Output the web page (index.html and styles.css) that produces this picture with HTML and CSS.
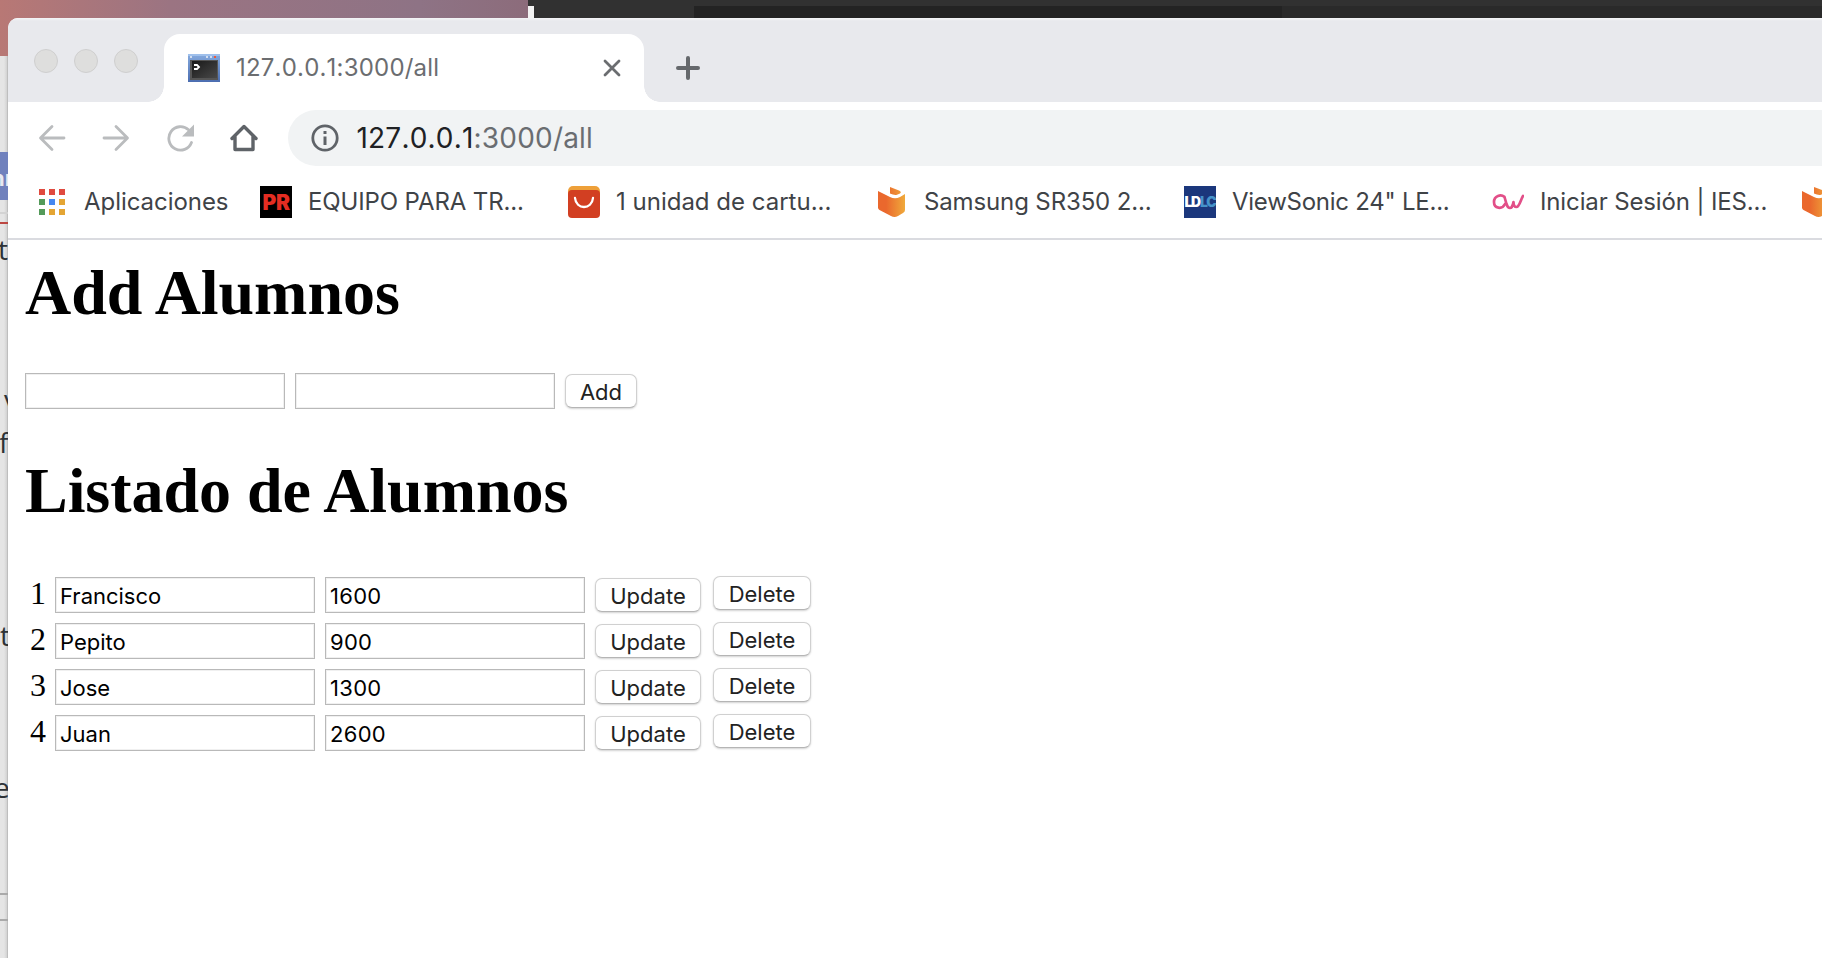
FILE: index.html
```html
<!DOCTYPE html>
<html lang="es">
<head>
<meta charset="utf-8">
<title>127.0.0.1:3000/all</title>
<link rel="stylesheet" href="styles.css">
</head>
<body>
<div class="desktop">
  <div class="dark-bar"><i class="sliver"></i><i class="dark-tab"></i><i class="dark-tab lighter"></i></div>
  <div class="behind">
    <span class="blue-band"><b>nr</b></span>
    <i class="rule pale"></i><i class="rule red"></i><i class="rule low"></i><i class="rule lower"></i>
    <span class="frag f1">t</span><span class="frag f2">v</span><span class="frag f3">f</span><span class="frag f4">t</span><span class="frag f5">e</span>
  </div>
  <main class="window">
    <div class="tabstrip">
      <div class="lights"><i></i><i></i><i></i></div>
      <div class="tab">
        <svg class="favicon" width="32" height="28" viewBox="0 0 32 28">
          <defs>
            <linearGradient id="frame" x2="0" y2="1"><stop stop-color="#86abdf"/><stop offset="1" stop-color="#4b6db0"/></linearGradient>
            <linearGradient id="screen" x2="1" y2="1"><stop stop-color="#191919"/><stop offset="1" stop-color="#484848"/></linearGradient>
          </defs>
          <path fill="url(#frame)" d="M0 0h32v28H0z"/><path fill="#9fc0ec" d="M0 0h32v2H0z"/>
          <path fill="#d3def0" d="M2 2h2v2H2zM18 2h2v2h-2zM22 2h2v2h-2z"/><path fill="#f0593a" d="M26 2h2v2h-2z"/>
          <path fill="#555" d="M2 6h28v20H2z"/><path fill="url(#screen)" d="M4 7h25v17H4z"/>
          <path d="M6 11h3l2 2-2 2H6" fill="none" stroke="#fff" stroke-width="1.8"/>
        </svg>
        <span class="tab-title">127.0.0.1:3000/all</span>
        <svg class="close" width="18" height="18" viewBox="0 0 18 18"><path d="M2 2l14 14M16 2L2 16" stroke="#6b6d70" stroke-width="2.8" stroke-linecap="round"/></svg>
      </div>
      <svg class="plus" width="24" height="24" viewBox="0 0 24 24"><path d="M12 2v20M2 12h20" stroke="#65686c" stroke-width="4" stroke-linecap="round"/></svg>
    </div>
    <div class="toolbar">
      <svg width="28" height="28" viewBox="0 0 28 28" class="nav"><path d="M26 14H3M14 2.500L2.500 14 14 25.500" /></svg>
      <svg width="28" height="28" viewBox="0 0 28 28" class="nav"><path d="M2 14h23M14 2.500L25.500 14 14 25.500"/></svg>
      <svg width="28" height="28" viewBox="0 0 28 28" class="nav"><path d="M25.500 18.500A11.700 11.700 0 1 1 22.500 5.800"/><path class="solid" d="M28 .500v12H16z"/></svg>
      <svg width="28" height="28" viewBox="0 0 28 28" class="nav home"><path d="M2 14.500L14 2.500l12 12M5 12v13.500h18V12"/></svg>
      <div class="omnibox">
        <svg width="28" height="28" viewBox="0 0 28 28"><circle cx="14" cy="14" r="12.200" fill="none" stroke="#5f6368" stroke-width="2.800"/><path fill="#5f6368" d="M12.500 7h3v3h-3zM12.500 12.500h3V21h-3z"/></svg>
        <span class="url"><b>127.0.0.1</b>:3000/all</span>
      </div>
    </div>
    <nav class="bookmarks">
      <a class="apps">
        <svg width="26" height="26" viewBox="0 0 26 26"><path fill="#e04a3f" d="M0 0h6v6H0zM10 0h6v6h-6zM20 0h6v6h-6z"/><path fill="#549a5a" d="M0 10h6v6H0zM0 20h6v6H0z"/><path fill="#4688f1" d="M10 10h6v6h-6z"/><path fill="#e4a534" d="M20 10h6v6h-6zM10 20h6v6h-6zM20 20h6v6h-6z"/></svg>
        <span class="t0">Aplicaciones</span>
      </a>
      <a class="mark"><i class="pr">PR</i><span class="t1">EQUIPO PARA TR...</span></a>
      <a class="mark">
        <svg width="32" height="32" viewBox="0 0 32 32"><rect width="32" height="20" rx="5" fill="#eea039"/><path fill="#d23f22" d="M0 8q0-4 4-4h24q4 0 4 4v20q0 4-4 4H4q-4 0-4-4z"/><path d="M7 12c1 12 17 12 18 0" fill="none" stroke="#fff" stroke-width="2.300" stroke-linecap="round"/></svg>
        <span class="t2">1 unidad de cartu...</span>
      </a>
      <a class="mark">
        <svg width="32" height="32" viewBox="0 0 32 32"><defs><linearGradient id="box" gradientUnits="userSpaceOnUse" x1="2" x2="29" y1="0" y2="0"><stop offset=".3" stop-color="#ea682d"/><stop offset="1" stop-color="#f0aa3b"/></linearGradient></defs><path fill="url(#box)" d="M2 5L14 11q5 2.500 10 0l5-3v16q0 2-2 3l-5 3q-3.500 2-7 0L3.500 24Q2 23 2 21.500z"/><path fill="url(#box)" d="M14 1l9 3.500q3 1.500 1 3l-3 1.300q-3 .7-7-1.300z"/></svg>
        <span class="t3">Samsung SR350 2...</span>
      </a>
      <a class="mark"><i class="ldlc">LD<b>LC</b></i><span class="t4">ViewSonic 24" LE...</span></a>
      <a class="mark">
        <svg width="32" height="32" viewBox="0 0 32 32"><path d="M12.500 11C9 8 2 9.500 2 16s8 8 11 2M12.500 11l2 7c1 3 2 4 3.500 4s3-3 3.500-6c0 3 1 5 3 5 3 0 4-7 6.500-11" fill="none" stroke="#e24f88" stroke-width="2.700" stroke-linecap="round" stroke-linejoin="round"/></svg>
        <span class="t5">Iniciar Sesión | IES...</span>
      </a>
      <a class="mark"><svg width="32" height="32" viewBox="0 0 32 32"><path fill="url(#box)" d="M2 5L14 11q5 2.500 10 0l5-3v16q0 2-2 3l-5 3q-3.500 2-7 0L3.500 24Q2 23 2 21.500z"/><path fill="url(#box)" d="M14 1l9 3.500q3 1.500 1 3l-3 1.300q-3 .7-7-1.300z"/></svg></a>
    </nav>
    <section class="page">
      <h1>Add Alumnos</h1>
      <form class="add"><input type="text"><input type="text"><button type="button">Add</button></form>
      <h1 class="second">Listado de Alumnos</h1>
      <div class="list">
        <div class="row"><span class="id">1</span><input type="text" value="Francisco"><input type="text" class="num" value="1600"><button type="button" class="update">Update</button><button type="button" class="delete">Delete</button></div>
        <div class="row"><span class="id">2</span><input type="text" value="Pepito"><input type="text" class="num" value="900"><button type="button" class="update">Update</button><button type="button" class="delete">Delete</button></div>
        <div class="row"><span class="id">3</span><input type="text" value="Jose"><input type="text" class="num" value="1300"><button type="button" class="update">Update</button><button type="button" class="delete">Delete</button></div>
        <div class="row"><span class="id">4</span><input type="text" value="Juan"><input type="text" class="num" value="2600"><button type="button" class="update">Update</button><button type="button" class="delete">Delete</button></div>
      </div>
    </section>
  </main>
</div>
</body>
</html>
```
FILE: styles.css
```css
* { box-sizing: border-box; }
body { margin: 0; overflow: hidden; font-family: Inter, sans-serif; }
svg { display: block; flex: none; }
.desktop { position: relative; width: 1822px; height: 958px; overflow: hidden; background: linear-gradient(90deg, #b87875, #9b7482 170px, #8e7385 420px, #8c6c7b 528px); }

/* Windows lying behind the browser */
.dark-bar { position: absolute; left: 528px; right: 0; top: 0; height: 18px; padding-top: 6px; display: flex; background: #313131; }
.sliver { width: 6px; background: #f3f3f3; }
.dark-tab { width: 588px; margin-left: 160px; background: #232323; }
.dark-tab.lighter { flex: 1; margin: 0; background: #2a2a2a; }
.behind { position: absolute; left: 0; top: 56px; width: 8px; bottom: 0; overflow: hidden; background: linear-gradient(90deg, #e5e5e5 4px, #d2d2d2 7px, #aaa); }
.blue-band { position: absolute; top: 96px; left: 0; width: 8px; height: 48px; background: #7081bd; color: #e6e8f0; font-size: 22px; line-height: 48px; }
.blue-band b { position: absolute; left: -9px; top: 2px; }
.rule { position: absolute; left: 0; width: 8px; height: 2px; background: #aaa; }
.pale { top: 156px; background: #d3d3d3; }
.red { top: 166px; background: #bc4742; }
.low { top: 837px; }
.lower { top: 863px; }
.frag { position: absolute; font: 28px/30px "Open Sans", sans-serif; color: #2d3236; }
.f1 { left: -2px; top: 178px; }
.f2 { left: 4px; top: 328px; }
.f3 { left: -1px; top: 371px; }
.f4 { left: 0; top: 564px; }
.f5 { left: -6px; top: 716px; }

/* Browser window */
.window { position: absolute; inset: 18px 0 0 8px; display: flex; flex-direction: column; background: #fff; border-top-left-radius: 10px; overflow: hidden; }
.tabstrip { height: 84px; display: flex; align-items: flex-end; background: linear-gradient(#f4f5f7, #e8e9ed 3px); }
.lights { width: 156px; height: 84px; padding: 31px 0 0 26px; display: flex; gap: 16px; }
.lights i { width: 24px; height: 24px; border-radius: 50%; border: 1px solid #cfcfcf; background: #dededd; }
.tab { position: relative; width: 480px; height: 68px; padding: 0 23px 0 24px; display: flex; align-items: center; background: #fff; border-radius: 16px 16px 0 0; }
.tab::before, .tab::after { content: ""; position: absolute; bottom: 0; width: 16px; height: 16px; }
.tab::before { left: -16px; background: radial-gradient(circle at 0 0, transparent 15.5px, #fff 16px); }
.tab::after { right: -16px; background: radial-gradient(circle at 100% 0, transparent 15.5px, #fff 16px); }
.tab-title { margin-left: 16px; flex: 1; font-size: 24px; line-height: 32px; color: #6b6d70; white-space: nowrap; font-kerning: none; letter-spacing: .2px; }
.plus { margin: 0 0 22px 32px; }
.toolbar { height: 72px; padding: 8px 0 0 30px; display: flex; align-items: flex-start; gap: 36px; }
.nav { margin-top: 14px; fill: none; stroke: #babcbe; stroke-width: 2.8; stroke-linecap: round; stroke-linejoin: round; }
.nav .solid { fill: #babcbe; stroke: none; }
.home { stroke: #5f6368; stroke-width: 3.4; }
.omnibox { flex: 1; height: 56px; margin-left: -6px; padding-left: 22.5px; display: flex; align-items: center; gap: 18px; background: #f1f3f4; border-radius: 28px 0 0 28px; }
.url { font-size: 28px; line-height: 40px; color: #6a6d71; white-space: nowrap; font-kerning: none; letter-spacing: .2px; }
.url b { font-weight: 400; color: #202124; }
.bookmarks { height: 66px; padding-left: 31px; display: flex; align-items: center; border-bottom: 2px solid #dadbe0; color: #3f4347; font-size: 24px; line-height: 36px; white-space: nowrap; overflow: hidden; padding-bottom: 8px; }
.apps { width: 221px; flex: none; display: flex; align-items: center; gap: 19px; }
.mark { width: 308px; flex: none; display: flex; align-items: center; gap: 16px; }
.t0 { letter-spacing: -.05px; }
.t1, .t3, .t5 { letter-spacing: -.13px; }
.t4 { letter-spacing: -.25px; }
.pr, .ldlc { width: 32px; height: 32px; flex: none; overflow: hidden; font-style: normal; text-align: center; }
.pr { background: #000; color: #e52d22; font: 900 21px/33px Inter, sans-serif; letter-spacing: -.5px; }
.ldlc { background: #1b377c; color: #fff; font: 900 14px/32px Inter, sans-serif; letter-spacing: -1.2px; }
.ldlc b { color: #4593c9; font-weight: 900; }

/* Document */
.page { padding: 0 0 0 17px; }
h1 { margin: 16px 0 0; font: bold 64px/74px "Liberation Serif", serif; color: #000; letter-spacing: -.05px; white-space: nowrap; }
.add { display: flex; gap: 10px; margin-top: 43px; height: 36px; }
h1.second { margin-top: 45px; }
input { width: 260px; height: 36px; margin: 0; padding: 2px 4px 0; border: 1px solid #b9b9b9; border-radius: 0; outline: 0; background: #fff; box-shadow: inset 0 0 0 1px #f0f0f0; font: 22px/30px Inter, sans-serif; color: #000; }
.num { letter-spacing: .3px; }
button { height: 34px; margin: 1px 0 0; padding: 1px 0 0; border: 1px solid #d0d0d0; border-bottom-color: #b5b5b5; border-radius: 7px; background: #fff; box-shadow: 0 1px 2px rgba(0,0,0,.18); font: 22px/30px Inter, sans-serif; color: #222; width: 72px; }
.list { margin-top: 49px; display: flex; flex-direction: column; gap: 10px; }
.row { display: flex; gap: 10px; height: 36px; }
.id { width: 20px; padding-left: 5px; font: 32px/32px "Liberation Serif", serif; }
.update { width: 106px; }
.delete { width: 98px; margin: -1px 0 0 2px; }
```
